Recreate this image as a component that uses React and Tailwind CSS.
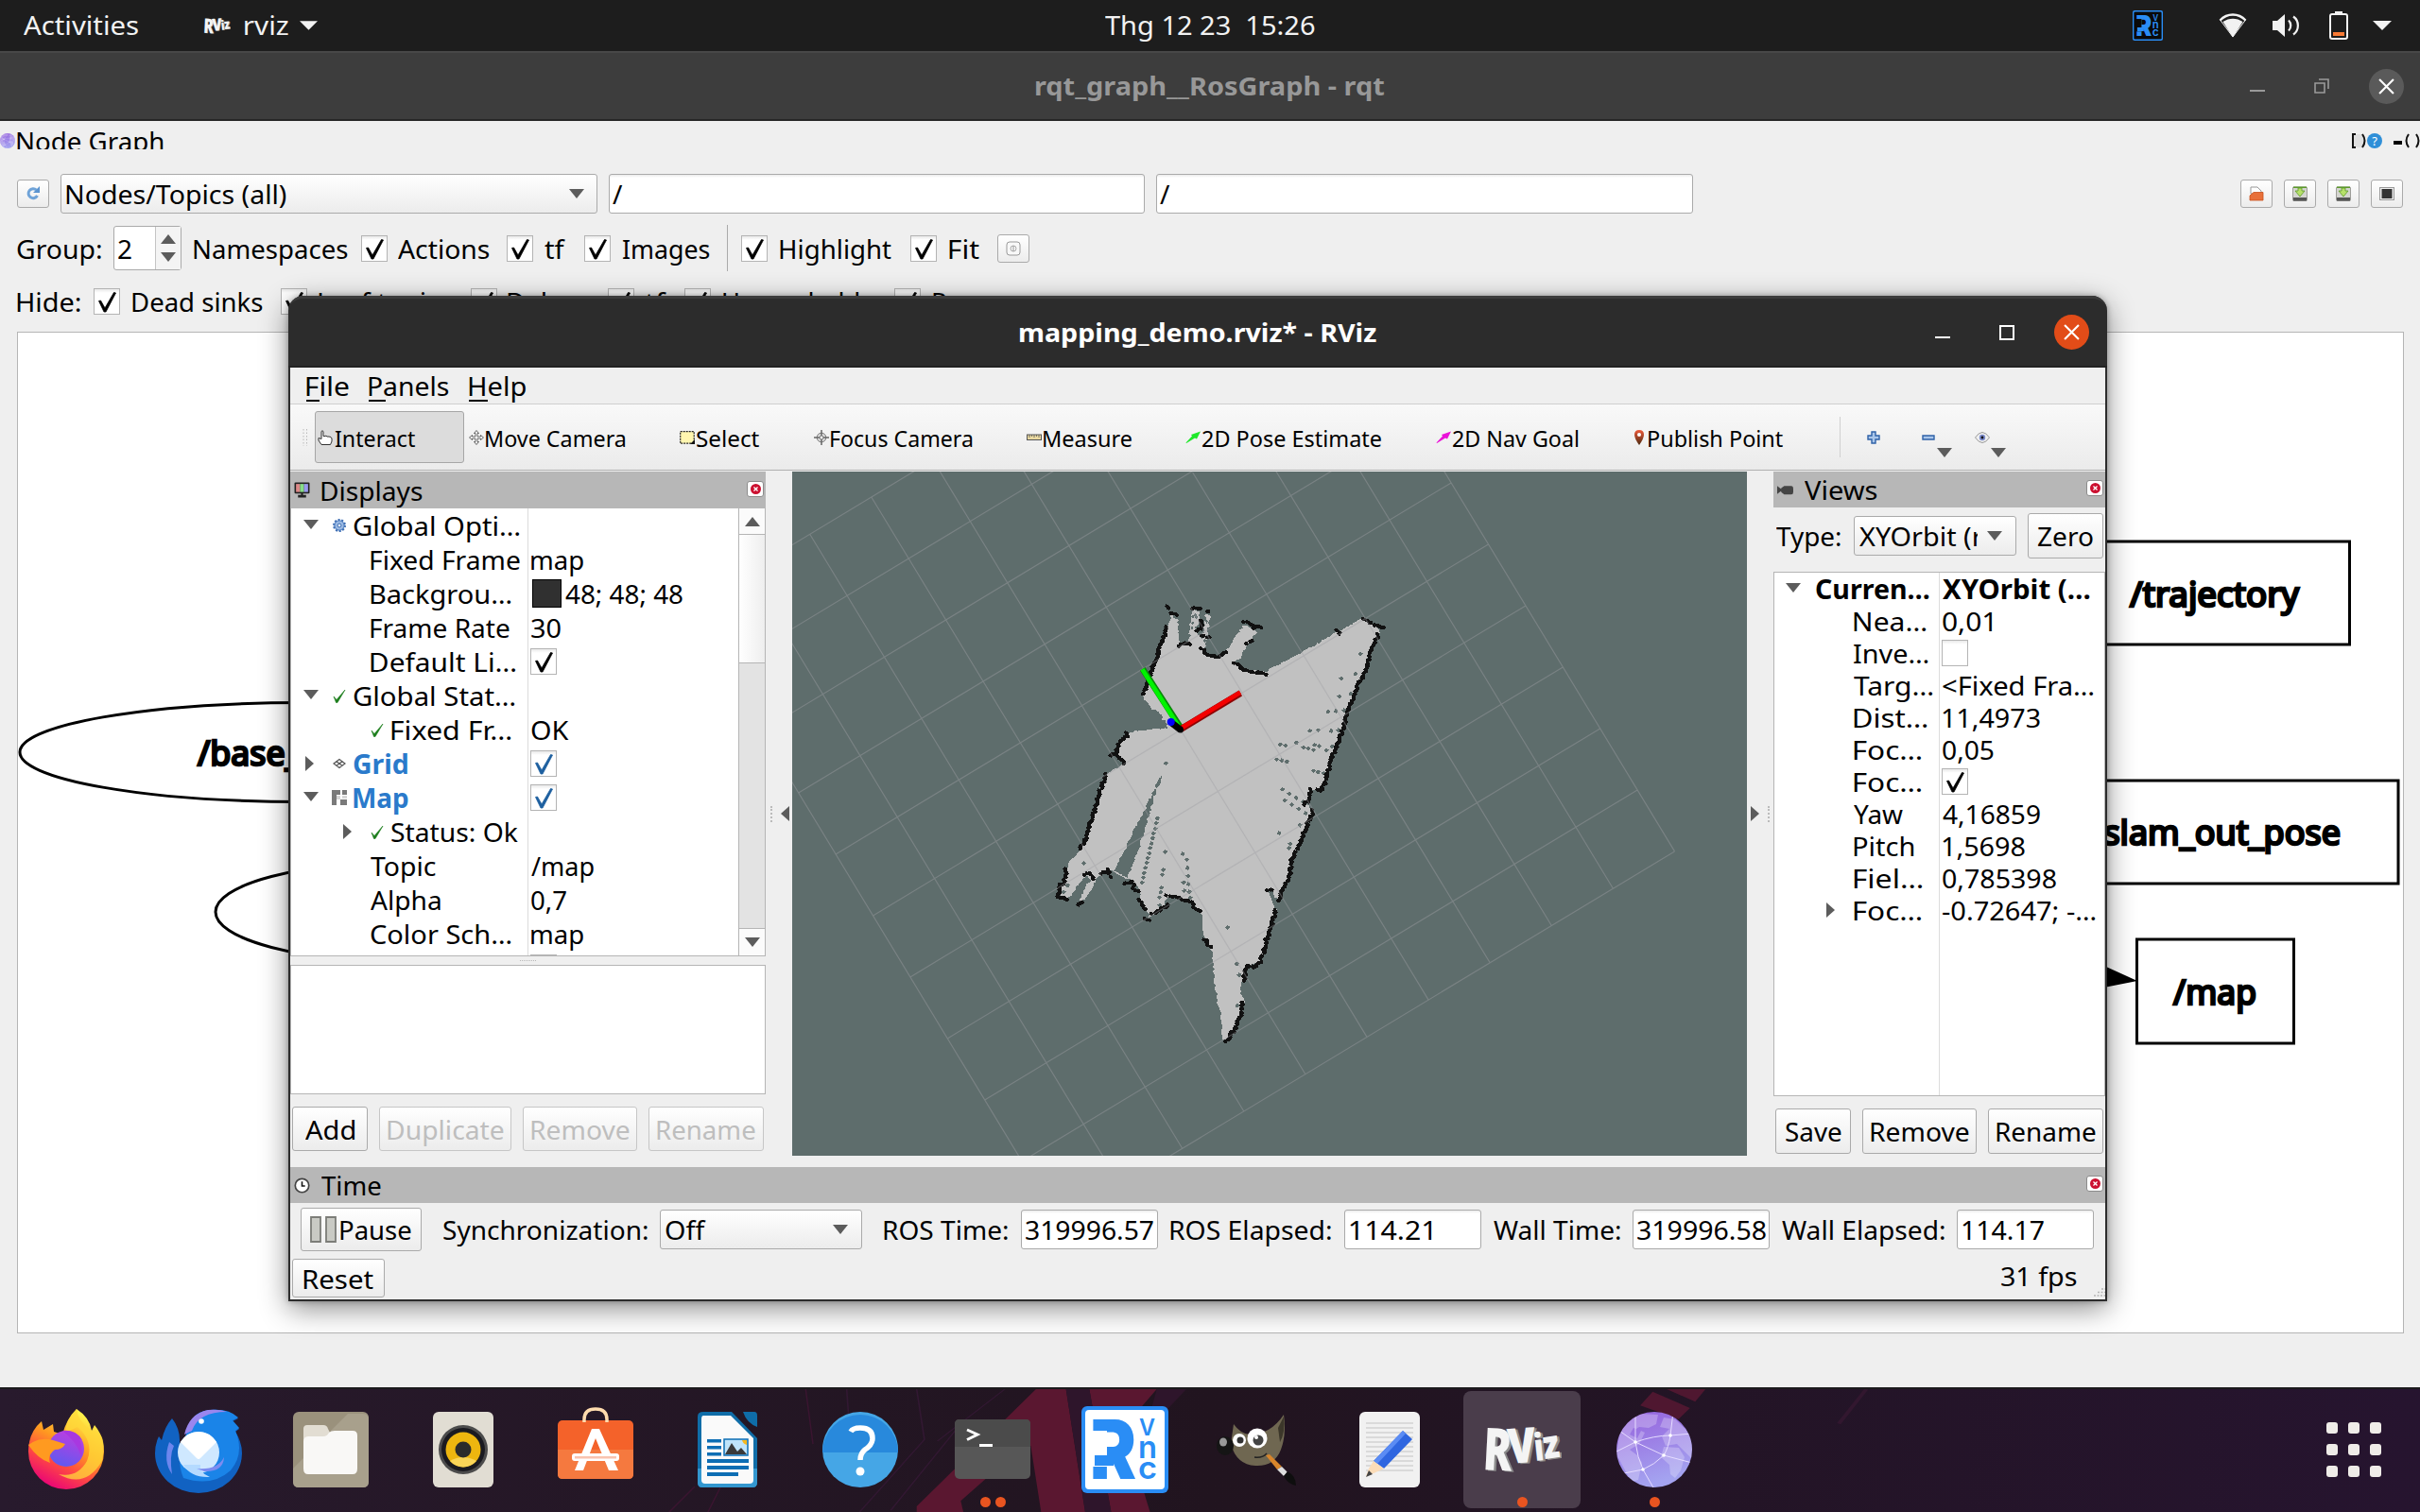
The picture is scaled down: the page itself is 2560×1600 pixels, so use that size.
import React, { useLayoutEffect, useRef } from "react";

function T({ w, className = "", children }) {
  const ref = useRef(null);
  useLayoutEffect(() => {
    const el = ref.current;
    const cs = getComputedStyle(el);
    const ctx = document.createElement("canvas").getContext("2d");
    ctx.font = `${cs.fontWeight} ${cs.fontSize} ${cs.fontFamily}`;
    const m = ctx.measureText(el.textContent);
    const left = m.actualBoundingBoxLeft;
    const k = w / (m.actualBoundingBoxRight + left);
    el.style.transform = `translate(${left * k}px, 0px) scaleX(${k})`;
  }, [w, children]);
  return (
    <span className={`block shrink-0 whitespace-pre ${className}`} style={{ width: w }}>
      <span ref={ref} className="inline-block origin-left">{children}</span>
    </span>
  );
}

function Check({ on = true, color = "#000", className = "" }) {
  return (
    <span className={`block size-[28px] shrink-0 border border-[#b4b4b4] bg-gradient-to-b from-[#e9e9e9] from-0% to-white to-15% ${className}`}>
      {on && (
        <svg viewBox="0 0 26 26" className="block size-full">
          <path d="M4.5 12.5 L6.5 12 L11 20 L20.500 3.500 L22.500 4 L12 24 L10 24 Z" fill={color} stroke={color} strokeWidth="0.8" />
        </svg>
      )}
    </span>
  );
}

const Down = ({ className = "" }) => (
  <svg viewBox="0 0 16 10" className={`block h-[10px] w-[16px] shrink-0 ${className}`}><path d="M0 0H16L8 10Z" fill="#5c5c5c" /></svg>
);
const Up = ({ className = "" }) => (
  <svg viewBox="0 0 16 10" className={`block h-[10px] w-[16px] shrink-0 ${className}`}><path d="M0 10H16L8 0Z" fill="#5c5c5c" /></svg>
);
const Right = ({ className = "" }) => (
  <svg viewBox="0 0 9 16" className={`block h-[16px] w-[9px] shrink-0 ${className}`}><path d="M0 0V16L9 8Z" fill="#5c5c5c" /></svg>
);

function Btn({ className = "", children }) {
  return (
    <div className={`flex shrink-0 items-center justify-center rounded-[3px] border border-[#aaa] bg-gradient-to-b from-white to-[#ececec] ${className}`}>{children}</div>
  );
}
function Field({ className = "", children }) {
  return (
    <div className={`flex shrink-0 items-center rounded-[3px] border border-[#aaa] bg-gradient-to-b from-[#ececec] from-0% to-white to-8% ${className}`}>{children}</div>
  );
}

/* ---------- top bar ---------- */

function RvizLetters() {
  return (
    <>
      <text transform="translate(0,63) rotate(3) scale(0.98,1.35)" fontSize="46">R</text>
      <text transform="translate(28,57) rotate(-4) scale(1,1.2)" fontSize="43">V</text>
      <text transform="translate(56,54) rotate(-6) scale(0.9,1.1)" fontSize="36">i</text>
      <text transform="translate(66,52) rotate(-8) scale(0.95,1.150)" fontSize="36">z</text>
    </>
  );
}

function RvizLogo({ className }) {
  return (
    <svg viewBox="0 0 84 84" className={className}>
      <g fontFamily="'Open Sans','Noto Sans',sans-serif" fontWeight="800">
        <g fill="#8a8a8a" transform="translate(2.500,1)"><RvizLetters /></g>
        <g fill="#f4f4f4"><RvizLetters /></g>
      </g>
    </svg>
  );
}

function VncLogo({ className, bg }) {
  return (
    <svg viewBox="0 0 92 92" className={className}>
      <rect width="92" height="92" rx="6" fill="#2a8df5" />
      <rect x="4" y="4" width="84" height="84" rx="4" fill={bg} />
      <g fill="#2a8df5" fontFamily="Inter,'Noto Sans',sans-serif">
        <text x="9" y="77" fontSize="86" fontWeight="900" textLength="49" lengthAdjust="spacingAndGlyphs">R</text>
        <path d="M8 26H27V64H8Z" fill={bg} />
        <path d="M14 14.500H34V26H14ZM14 52H34V63H14Z" />
        <text x="61" y="31" fontSize="24" fontWeight="600" textLength="17" lengthAdjust="spacingAndGlyphs">V</text>
        <text x="60" y="55" fontSize="33" fontWeight="600" textLength="20" lengthAdjust="spacingAndGlyphs">n</text>
        <text x="60" y="77" fontSize="33" fontWeight="600" textLength="20" lengthAdjust="spacingAndGlyphs">c</text>
      </g>
    </svg>
  );
}

function TopBar() {
  return (
    <div className="flex h-[54px] items-center bg-[#1d1d1d] text-[27px] leading-[54px] text-[#f2f2f2]">
      <T w={121} className="ml-[25px]">Activities</T>
      <RvizLogo className="ml-[69px] size-[29px]" />
      <T w={46} className="ml-[15px]">rviz</T>
      <svg viewBox="0 0 20 10" className="ml-[12px] h-[10px] w-[19px]"><path d="M0 0H20L10 10Z" fill="#f2f2f2" /></svg>
      <T w={222} className="ml-[833px]">Thg 12 23  15:26</T>
      <VncLogo bg="#0a0a0a" className="ml-[865px] size-[32px]" />
      <svg viewBox="0 0 30 26" className="ml-[59px] h-[26px] w-[30px]">
        <path d="M1.500 7.500 C9 -0.500 21 -0.500 28.500 7.500" fill="none" stroke="#f2f2f2" strokeWidth="2.400" />
        <path d="M4.500 9 C11 4.500 19 4.500 25.500 9 L15 25.500Z" fill="#f2f2f2" />
        <path d="M1.500 7 L15 25" stroke="#f2f2f2" strokeWidth="1" /><path d="M28.500 7 L15 25" stroke="#f2f2f2" strokeWidth="1" />
      </svg>
      <svg viewBox="0 0 30 26" className="ml-[26px] h-[26px] w-[30px]">
        <path d="M1 8 H6 L14 1 V25 L6 18 H1Z" fill="#f2f2f2" />
        <path d="M18 7.500 C21 10.500 21 15.500 18 18.500 M23 3.500 C29.500 8 29.500 18 23 22.500" fill="none" stroke="#f2f2f2" strokeWidth="2.200" />
      </svg>
      <svg viewBox="0 0 20 30" className="ml-[31px] h-[30px] w-[20px]">
        <rect x="6" y="0" width="8" height="3" fill="#f2f2f2" />
        <rect x="1" y="3" width="18" height="26" rx="2" fill="none" stroke="#f2f2f2" strokeWidth="2" />
        <rect x="4" y="22" width="12" height="4" fill="#f97a35" />
      </svg>
      <svg viewBox="0 0 20 10" className="ml-[26px] h-[10px] w-[20px]"><path d="M0 0H20L10 10Z" fill="#f2f2f2" /></svg>
    </div>
  );
}

/* ---------- node graph window ---------- */

function Globe({ className }) {
  return (
    <svg viewBox="0 0 80 80" className={className}>
      <defs>
        <linearGradient id="globe" x1="0" y1="0" x2="0.3" y2="1"><stop offset="0" stopColor="#9560dc" /><stop offset="1" stopColor="#a4a3f0" /></linearGradient>
        <clipPath id="globeClip"><circle cx="40" cy="40" r="40" /></clipPath>
      </defs>
      <circle cx="40" cy="40" r="40" fill="url(#globe)" />
      <g clipPath="url(#globeClip)">
        <path d="M5 10 L26 2 L44 3 L42 13 L34 17 L24 16 L21 18 L18 17 L14 24 L22 28 L26 20 L30 22 L24 34 L14 40 L22 46 L27 54 L23 72 L16 74 L8 60 L0 45Z" fill="#fff" opacity="0.250" />
        <path d="M46 16 L50 6 L62 8 L80 25 V50 L72 42 L64 34 L52 36 L48 26 L56 18Z M50 37 L66 38 L72 48 L68 62 L62 70 L57 66 L56 56 L47 48Z" fill="#fff" opacity="0.250" />
        <path d="M20 0 L20 32 Q22 48 28 61 L40 82 M0 42 L20 32 L3 20 M20 32 Q40 25 57 25 L80 23 M57 25 L60 0 M20 32 L50 46 L80 54 M57 25 Q55 38 50 46 Q40 56 28 61 L8 65" fill="none" stroke="#e6dcff" strokeWidth="1" />
        {[[20, 32], [57, 25], [50, 46], [28, 61]].map(([x, y]) => <circle key={x} cx={x} cy={y} r="1.800" fill="#fff" />)}
      </g>
    </svg>
  );
}

function ToolButton({ className = "", children }) {
  return (
    <Btn className={`h-[30px] w-[34px] ${className}`}>
      <svg viewBox="0 0 16 16" className="size-[16px]">{children}</svg>
    </Btn>
  );
}
const SaveGlyph = () => (
  <>
    <rect x="0.500" y="1" width="15" height="14.500" rx="1" fill="#d5d5d0" stroke="#8b8b88" strokeWidth="0.8" />
    <rect x="1" y="12" width="14" height="3.500" fill="#555" />
    <path d="M1 0.500H15V2H1Z" fill="#5c9a2a" />
    <path d="M6 2H10V5H13L8 11L3 5H6Z" fill="#b7e06a" stroke="#5c9a2a" strokeWidth="0.8" />
  </>
);

function RosGraph() {
  const label = { fontFamily: "'Noto Sans',sans-serif", fontSize: 36, stroke: "#000", strokeWidth: 2.6, lengthAdjust: "spacingAndGlyphs" };
  return (
    <div className="ml-[18px] h-[1060px] w-[2525px] border border-[#b5b5b5] bg-white">
      <svg viewBox="19 352 2523 1058" className="block size-full">
        <g fill="none" stroke="#000" strokeWidth="3">
          <ellipse cx="321" cy="796" rx="300" ry="52.500" />
          <ellipse cx="430" cy="965" rx="202" ry="53" />
          <rect x="2000" y="573" width="485.500" height="109" />
          <rect x="2100" y="826" width="437" height="109" />
          <rect x="2260.500" y="994" width="166" height="110" />
        </g>
        <path d="M2195 1008 L2261 1038 L2195 1051Z" />
        <text x="209" y="810" textLength="168" {...label}>/base_link</text>
        <text x="2253" y="642" textLength="179" {...label}>/trajectory</text>
        <text x="2212" y="894" textLength="264" {...label}>/slam_out_pose</text>
        <text x="2299" y="1063" textLength="88" {...label}>/map</text>
      </svg>
    </div>
  );
}

function RqtWindow() {
  return (
    <div className="h-[1414px] bg-[#efefef] text-[28px] leading-[36px] text-black">
      <div className="flex h-[74px] items-center border-t-2 border-b-2 border-t-[#484848] border-b-[#262626] bg-[#3d3d3d]">
        <T w={369} className="ml-[1095px] text-[27px] font-bold text-[#989898]">rqt_graph__RosGraph - rqt</T>
        <span className="mt-[10px] ml-[916px] h-[2px] w-[16px] bg-[#9a9a9a]" />
        <svg viewBox="0 0 16 16" className="ml-[52px] size-[16px]"><path d="M1 5H11V15H1Z M5 1H15V11" fill="none" stroke="#9a9a9a" strokeWidth="1.600" /></svg>
        <span className="ml-[42px] flex size-[37px] items-center justify-center rounded-full bg-[#5a5a5a]">
          <svg viewBox="0 0 16 16" className="size-[17px]"><path d="M1 1L15 15M15 1L1 15" stroke="#fff" strokeWidth="2" /></svg>
        </span>
      </div>
      <div className="mt-[4px] flex h-[26px] items-start overflow-hidden">
        <Globe className="mt-[9px] size-[16px]" />
        <T w={155} className="ml-[2px] leading-[34px]">Node Graph</T>
        <svg viewBox="0 0 72 16" className="mt-[9px] ml-[2315px] h-[16px] w-[72px]">
          <rect x="2" y="1" width="10" height="14" fill="#e0e0e0" />
          <path d="M4 1H1V15H4" fill="none" stroke="#111" strokeWidth="2" /><path d="M11 1Q16 8 11 15" fill="none" stroke="#111" strokeWidth="2" />
          <circle cx="24" cy="8" r="8" fill="#2f8fd8" /><text x="24" y="13" fontSize="13" fill="#fff" textAnchor="middle" fontFamily="Noto Sans, sans-serif">?</text>
          <path d="M44 8H53V12H44Z" /><path d="M60 1Q55 8 60 15M68 1Q73 8 68 15" fill="none" stroke="#111" strokeWidth="2" />
        </svg>
      </div>
      <div className="mt-[26px] flex h-[42px] items-center">
        <ToolButton className="ml-[18px]"><path d="M11.500 4 A5 5 0 1 0 12.500 10" fill="none" stroke="#6fa3d8" strokeWidth="3" /><path d="M8 7H15V0Z" fill="#5b94d0" /></ToolButton>
        <Btn className="ml-[12px] h-[42px] w-[568px] !justify-start">
          <T w={233} className="ml-[5px]">Nodes/Topics (all)</T><Down className="ml-[299px]" />
        </Btn>
        <Field className="ml-[12px] h-[42px] w-[567px]"><T w={11} className="ml-[3px]">/</T></Field>
        <Field className="ml-[12px] h-[42px] w-[568px]"><T w={11} className="ml-[3px]">/</T></Field>
        <ToolButton className="ml-[579px]"><path d="M2 1H9L13 5V8H2Z" fill="#fff" stroke="#999" /><path d="M1 15V10L5 6.500H15V15Z" fill="#e8703a" stroke="#c8501c" strokeWidth="0.8" /></ToolButton>
        <ToolButton className="ml-[12px]"><SaveGlyph /></ToolButton>
        <ToolButton className="ml-[12px]"><SaveGlyph /></ToolButton>
        <ToolButton className="ml-[12px]"><rect x="0.500" y="1.500" width="15" height="13" fill="#eee" stroke="#999" /><rect x="2.500" y="3" width="11" height="10" fill="#333" /></ToolButton>
      </div>
      <div className="mt-[13px] flex h-[47px] items-center">
        <T w={89} className="ml-[18px]">Group:</T>
        <div className="ml-[13px] flex h-[47px] w-[72px] items-center rounded-[3px] border border-[#aaa] bg-white">
          <T w={14} className="ml-[4px]">2</T>
          <div className="ml-auto flex h-full w-[27px] flex-col items-center justify-between border-l border-[#c4c4c4] bg-[#f4f4f4] py-[8px]"><Up /><Down /></div>
        </div>
        <T w={163} className="ml-[13px]">Namespaces</T>
        <Check className="ml-[14px]" /><T w={97} className="ml-[11px]">Actions</T>
        <Check className="ml-[18px]" /><T w={22} className="ml-[12px]">tf</T>
        <Check className="ml-[20px]" /><T w={92} className="ml-[13px]">Images</T>
        <span className="ml-[18px] h-[49px] w-px bg-[#aaa]" />
        <Check className="ml-[14px]" /><T w={118} className="ml-[13px]">Highlight</T>
        <Check className="ml-[20px]" /><T w={32} className="ml-[13px]">Fit</T>
        <ToolButton className="ml-[19px]"><rect x="1" y="1" width="14" height="14" rx="3" fill="#f8f8f8" stroke="#999" /><circle cx="8" cy="8" r="3" fill="none" stroke="#aaa" /><path d="M8 5V11" stroke="#999" /></ToolButton>
      </div>
      <div className="mt-[13px] flex h-[40px] items-center">
        <T w={67} className="ml-[18px]">Hide:</T>
        <Check className="ml-[14px]" /><T w={138} className="ml-[13px]">Dead sinks</T>
        <Check className="ml-[19px]" /><T w={141} className="ml-[12px]">Leaf topics</T>
        <Check className="ml-[20px]" /><T w={85} className="ml-[11px]">Debug</T>
        <Check className="ml-[21px]" /><T w={23} className="ml-[11px]">tf</T>
        <Check className="ml-[19px]" /><T w={160} className="ml-[13px]">Unreachable</T>
        <Check className="ml-[21px]" /><T w={94} className="ml-[13px]">Params</T>
      </div>
      <div className="h-[12px]" />
      <RosGraph />
    </div>
  );
}

/* ---------- map view ---------- */

function makeRandom(seed) {
  let s = seed;
  return () => {
    s = (s * 16807) % 2147483647;
    return s / 2147483647 - 0.5;
  };
}
function walk(points, step) {
  const out = [];
  for (let i = 0; i < points.length - 1; i++) {
    const [x0, y0] = points[i];
    const [x1, y1] = points[i + 1];
    const n = Math.max(1, Math.round(Math.hypot(x1 - x0, y1 - y0) / step));
    for (let k = 0; k < n; k++) out.push([x0 + ((x1 - x0) * k) / n, y0 + ((y1 - y0) * k) / n]);
  }
  out.push(points[points.length - 1]);
  return out;
}
function roughPolygon(points, seed) {
  const r = makeRandom(seed);
  return walk([...points, points[0]], 7).map(([x, y]) => `${(x + r() * 8).toFixed(1)},${(y + r() * 6).toFixed(1)}`).join(" ");
}
function cells(points, seed) {
  const r = makeRandom(seed);
  return walk(points, 6).map(([x, y]) => {
    const cx = x + r() * 8;
    const cy = y + r() * 5;
    return `M${(cx - 7).toFixed(1)} ${cy.toFixed(1)}l4 -6l7 1l4 5l-4 6l-7 -1z`;
  }).join("");
}

const rightEdge = [[1195, 205], [1182, 235], [1165, 270], [1158, 310], [1125, 370], [1110, 410], [1095, 445], [1085, 490], [1065, 540], [1045, 590], [1035, 630], [1015, 685]];
const midEdge = [[988, 748], [968, 790], [945, 850], [920, 900], [912, 950], [890, 990], [880, 1024]];
const mapArea = [
  [528, 125], [545, 150], [558, 160], [563, 200], [568, 238], [590, 232], [596, 215], [600, 140], [610, 130], [627, 135], [626, 155], [615, 190], [622, 205], [635, 215], [638, 250], [650, 268], [685, 272],
  [712, 260], [740, 212], [770, 175], [800, 190], [808, 200], [780, 240], [760, 275], [738, 290], [770, 312], [835, 322],
  [1147, 155], [1200, 188], ...rightEdge, [982, 684], [964, 725], ...midEdge, [850, 990], [873, 1048], [855, 1100], [830, 1185], [820, 1212],
  [775, 1224], [768, 1260], [758, 1295], [768, 1335], [748, 1400], [712, 1456], [700, 1450], [697, 1390], [685, 1330], [675, 1270],
  [668, 1180], [655, 1160], [640, 1130], [635, 1065], [610, 1040], [600, 1028], [560, 1015], [530, 1010], [505, 1055], [468, 1075],
  [440, 1015], [436, 985], [415, 962], [396, 955], [345, 930], [320, 940], [298, 960], [285, 990], [262, 1020], [245, 1022], [262, 1000],
  [270, 975], [285, 958], [265, 945], [240, 980], [218, 1012], [195, 1015], [178, 1003], [205, 930], [215, 905], [245, 872], [268, 830],
  [283, 780], [295, 745], [310, 690], [332, 634], [388, 602], [365, 570], [372, 540], [400, 512], [420, 502], [530, 495], [505, 455],
  [470, 425], [445, 395], [478, 310], [503, 245], [528, 185], [536, 150],
];
const gap = [[506, 635], [500, 665], [490, 690], [465, 765], [440, 850], [420, 900], [398, 955], [355, 932], [385, 880], [412, 825], [440, 770], [478, 695], [500, 650]];
const walls = [
  [[528, 120], [530, 126]], [[540, 142], [555, 145]], [[525, 185], [503, 245], [478, 310], [462, 355], [446, 390]], [[565, 240], [580, 232], [600, 237]],
  [[608, 125], [628, 128]], [[657, 135], [658, 136]], [[635, 163], [638, 178], [620, 197]], [[638, 210], [655, 215]],
  [[635, 250], [650, 270], [685, 275], [712, 260]], [[770, 170], [785, 170], [800, 185], [822, 183]], [[780, 232], [795, 225]],
  [[740, 292], [770, 315], [835, 328]], [[1150, 157], [1165, 167], [1190, 180], [1208, 187]], [[1066, 192], [1073, 204]], rightEdge, [[1015, 685], [998, 683]],
  [[982, 682], [972, 712], [962, 730]], midEdge, [[845, 990], [856, 988]], [[870, 1052], [855, 1100], [838, 1150], [830, 1185], [820, 1210], [805, 1228], [775, 1224], [768, 1270]],
  [[766, 1335], [760, 1365], [748, 1400], [735, 1425], [712, 1458]], [[398, 508], [397, 520], [372, 537], [362, 570], [345, 577]], [[365, 575], [388, 602]],
  [[332, 636], [310, 690], [295, 745], [283, 780], [268, 830], [248, 865]], [[205, 928], [197, 965], [182, 980], [178, 1010], [208, 1020]],
  [[265, 942], [278, 938], [290, 955]], [[246, 1035], [256, 1028]], [[318, 940], [338, 930], [343, 950]], [[393, 972], [413, 963], [420, 990], [432, 993]],
  [[438, 1020], [455, 1050]], [[457, 1080], [470, 1085]], [[478, 1065], [530, 1038]], [[525, 1010], [560, 1015], [603, 1030], [612, 1048], [630, 1055]], [[645, 1142], [660, 1165]],
];
const holes = [
  [1138, 266], [1122, 327], [1077, 341], [1107, 388], [1071, 396], [1035, 443], [1060, 441], [1086, 439], [978, 502], [1004, 500], [1045, 502], [1068, 500],
  [884, 544], [900, 547], [935, 539], [957, 553], [972, 556], [989, 561], [992, 545], [1007, 549], [1030, 562], [1048, 550], [872, 590], [889, 593], [905, 597],
  [989, 625], [1004, 629], [1022, 632], [891, 682], [912, 695], [934, 708], [956, 720], [898, 716], [920, 729], [942, 742], [964, 755], [880, 816], [946, 792],
  [915, 849], [911, 862], [521, 602], [494, 771], [490, 786], [487, 803], [481, 818], [479, 832], [475, 848], [471, 862], [468, 878], [463, 893], [460, 908],
  [456, 923], [452, 939], [449, 953], [445, 969], [518, 874], [513, 929], [509, 944], [507, 984], [504, 998], [500, 1014], [501, 1038], [574, 880], [587, 898],
  [589, 923], [591, 948], [577, 968], [592, 973], [579, 993], [595, 997], [598, 1015], [716, 1106], [746, 1218], [753, 1252], [747, 1346], [260, 909], [209, 977], [196, 998],
];

function MapView() {
  const O = [411, 273.4], u = [65.1, -39.3], v = [39.4, 65];
  const p = (a, b) => `${(O[0] + a * u[0] + b * v[0]).toFixed(1)} ${(O[1] + a * u[1] + b * v[1]).toFixed(1)}`;
  let grid = "";
  for (let i = -5; i <= 5; i++) grid += `M${p(i, -5)}L${p(i, 5)}M${p(-5, i)}L${p(5, i)}`;
  return (
    <svg viewBox="0 0 1010 724" className="block h-[724px] w-[1010px] shrink-0 bg-[#5e6d6c]">
      <g transform="translate(221.700,101.500) scale(0.33333,0.34439)" shapeRendering="crispEdges">
        <polygon points={roughPolygon(mapArea, 77)} fill="#c1c1c1" />
        <path d={cells([[655, 148], [648, 185], [640, 245]], 5)} fill="#c1c1c1" />
        <polygon points={roughPolygon(gap, 41)} fill="#5e6d6c" />
        <path d="M846 995L858 990L878 1046L868 1050Z" fill="#5e6d6c" />
        {holes.map(([x, y], i) => <path key={i} d={`M${x - 8} ${y - 1}l5 -2l1 -4l5 2l5 3l-2 4l-5 5l-5 -3z`} fill="#5e6d6c" />)}
        {[[607, 150], [614, 146], [604, 185], [618, 152], [645, 225], [640, 190], [650, 165], [606, 170]].map(([x, y], i) => <path key={i} d={`M${x - 5} ${y}l5 -5l5 5l-5 7z`} fill="#5e6d6c" />)}
        {walls.map((w, i) => <path key={i} d={cells(w, 101 + i * 37)} fill="#111" />)}
      </g>
      <path d={grid} stroke="#a0a0a4" strokeOpacity="0.420" strokeWidth="1.200" fill="none" />
      <g transform="translate(221.700,101.500) scale(0.33333,0.34439)">
        <path d="M447 312L566 490" stroke="#078a07" strokeWidth="20" /><path d="M446 313L563 490" stroke="#00f400" strokeWidth="14" />
        <path d="M570 496L758 386" stroke="#8d0000" strokeWidth="20" /><path d="M569 494L757 384" stroke="#f40000" strokeWidth="14" />
        <path d="M540 478L569 500" stroke="#000" strokeWidth="21" /><circle cx="568" cy="499" r="9" />
        <circle cx="537" cy="475" r="12" fill="#0000f8" />
      </g>
    </svg>
  );
}

/* ---------- RViz window ---------- */

function DockTitle({ w, title, icon, className = "" }) {
  return (
    <div className={`flex shrink-0 items-center bg-[#b7b7b7] pl-[4px] ${className}`}>
      <svg viewBox="0 0 16 16" className="size-[17px]">{icon}</svg>
      <T w={w} className="ml-[12px]">{title}</T>
      <span className="mr-[2px] mb-[3px] ml-auto flex h-[17px] w-[18px] items-center justify-center rounded-[3px] border border-[#8c8c8c] bg-white">
        <svg viewBox="0 0 12 12" className="size-[11px]"><circle cx="6" cy="6" r="6" fill="#cc1030" /><path d="M3.800 3.800L8.200 8.200M8.200 3.800L3.800 8.200" stroke="#fff" strokeWidth="1.400" /></svg>
      </span>
    </div>
  );
}

const Ok = () => <path d="M2 9L5 12.500L14 2L6 15.500H4.500Z" fill="#1b7d1b" stroke="#1b7d1b" strokeWidth="0.6" />;
const Gear = () => (
  <g><circle cx="8" cy="8" r="5.800" fill="#8db0de" stroke="#3f6fb4" strokeWidth="2.400" strokeDasharray="2 1.600" /><circle cx="8" cy="8" r="5" fill="#9dbbe4" stroke="#4a79bb" strokeWidth="0.8" /><circle cx="8" cy="8" r="2" fill="#dfe9f6" stroke="#3f6fb4" /></g>
);
const GridIcon = () => <path d="M2 8L8 3.500L14 8L8 12.500ZM5 5.700L11 10.300M11 5.700L5 10.300" fill="none" stroke="#555" strokeWidth="1.200" />;
const MapIcon = () => (
  <g fill="#7a7a7a"><path d="M0 0H9V5H5V16H0ZM11 0H16V5H11ZM9 10H16V16H9V13Z" /><path d="M5 6H9V10H5ZM11 6H16V9H11Z" fill="#d6d6d6" /></g>
);

function DisplayRow({ lv = "a", exp, icon, name, w, blue, children }) {
  return (
    <div className="flex h-[36px] shrink-0 items-center">
      <div className="flex h-full w-[251px] shrink-0 items-center border-r border-[#dcdcdc]">
        {lv === "a" ? (
          <>
            <span className="ml-[12px] flex w-[17px] justify-center">{exp === "down" ? <Down className="mb-[2px]" /> : <Right className="mr-[2px]" />}</span>
            <svg viewBox="0 0 16 16" className="ml-[14px] size-[16px]">{icon}</svg>
            <T w={w} className={blue ? "ml-[7px] font-bold text-[#2a7acb]" : "ml-[7px]"}>{name}</T>
          </>
        ) : lv === "b" ? (
          <>
            <span className="ml-[55px] w-[9px]">{exp && <Right />}</span>
            <svg viewBox="0 0 16 16" className="ml-[19px] size-[16px]">{icon}</svg>
            <T w={w} className="ml-[7px]">{name}</T>
          </>
        ) : <T w={w} className="ml-[84px]">{name}</T>}
      </div>
      <div className="flex items-center pl-[3px]">{children}</div>
    </div>
  );
}

function Displays() {
  return (
    <div className="flex w-[503px] shrink-0 flex-col">
      <DockTitle w={107} title="Displays" className="h-[39px]" icon={<><rect x="0.500" y="0.500" width="15" height="11" rx="1" fill="#222" /><rect x="2" y="2" width="4" height="8" fill="#d88" /><rect x="6" y="2" width="4" height="8" fill="#8d8" /><rect x="10" y="2" width="4" height="8" fill="#99e" /><path d="M7 11H9V13H12V15.500H4V13H7Z" fill="#222" /></>} />
      <div className="flex h-[474px] border-b border-l border-[#b5b5b5] bg-white">
        <div className="flex flex-1 flex-col overflow-hidden">
          <DisplayRow exp="down" icon={<Gear />} name="Global Opti…" w={176} />
          <DisplayRow lv="c" name="Fixed Frame" w={158}><T w={55}>map</T></DisplayRow>
          <DisplayRow lv="c" name="Backgrou…" w={149}><span className="ml-[1px] h-[30px] w-[31px] border border-black bg-[#303030]" /><T w={124} className="ml-[4px]">48; 48; 48</T></DisplayRow>
          <DisplayRow lv="c" name="Frame Rate" w={147}><T w={31}>30</T></DisplayRow>
          <DisplayRow lv="c" name="Default Li…" w={154}><Check className="-ml-px" /></DisplayRow>
          <DisplayRow exp="down" icon={<Ok />} name="Global Stat…" w={171} />
          <DisplayRow lv="b" icon={<Ok />} name="Fixed Fr…" w={127}><T w={40}>OK</T></DisplayRow>
          <DisplayRow exp="right" icon={<GridIcon />} name="Grid" w={57} blue><Check color="#1d5f9f" className="-ml-px" /></DisplayRow>
          <DisplayRow exp="down" icon={<MapIcon />} name="Map" w={58} blue><Check color="#1d5f9f" className="-ml-px" /></DisplayRow>
          <DisplayRow lv="b" exp icon={<Ok />} name="Status: Ok" w={134} />
          <DisplayRow lv="c" name="Topic" w={69}><T w={66}>/map</T></DisplayRow>
          <DisplayRow lv="c" name="Alpha" w={74}><T w={37}>0,7</T></DisplayRow>
          <DisplayRow lv="c" name="Color Sch…" w={149}><T w={55}>map</T></DisplayRow>
          <DisplayRow lv="c" name="" w={1}><Check on={false} className="-ml-px" /></DisplayRow>
        </div>
        <div className="flex w-[29px] flex-col border-x border-[#b5b5b5] bg-[#e3e3e3]">
          <div className="flex h-[27px] items-center justify-center bg-[#fbfbfb]"><Up /></div>
          <div className="h-[137px] border-y border-[#b5b5b5] bg-gradient-to-r from-white to-[#eee]" />
          <div className="mt-auto flex h-[29px] items-center justify-center border-t border-[#b5b5b5] bg-[#fbfbfb]"><Down /></div>
        </div>
      </div>
      <div className="flex h-[9px] items-center justify-center"><span className="h-[1px] w-[17px] border-t border-dotted border-[#b8b8b8]" /></div>
      <div className="h-[137px] border border-[#b5b5b5] bg-white" />
      <div className="mt-[13px] flex h-[47px] pl-[2px]">
        <Btn className="w-[80px]"><T w={52}>Add</T></Btn>
        <Btn className="ml-[12px] w-[140px] !border-[#c6c6c6] text-[#bebebe]"><T w={123}>Duplicate</T></Btn>
        <Btn className="ml-[12px] w-[121px] !border-[#c6c6c6] text-[#bebebe]"><T w={104}>Remove</T></Btn>
        <Btn className="ml-[12px] w-[122px] !border-[#c6c6c6] text-[#bebebe]"><T w={104}>Rename</T></Btn>
      </div>
    </div>
  );
}

function ViewRow({ exp, name, w, bold, children }) {
  return (
    <div className={`flex h-[34px] shrink-0 items-center ${bold ? "font-bold" : ""}`}>
      <div className="flex h-full w-[175px] shrink-0 items-center">
        {bold ? (
          <><Down className="mb-[2px] ml-[12px]" /><T w={w} className="ml-[16px]">{name}</T></>
        ) : (
          <><span className="ml-[55px] w-[9px]">{exp && <Right />}</span><T w={w} className="ml-[20px]">{name}</T></>
        )}
      </div>
      <div className="flex items-center pl-[3px]">{children}</div>
    </div>
  );
}

function Views() {
  return (
    <div className="flex w-[351px] shrink-0 flex-col">
      <DockTitle w={77} title="Views" className="h-[38px]" icon={<path d="M0 4L4 7V9L0 12ZM4 6L7 4H14Q16 4 16 7V10Q16 12.500 14 12.500H7L4 10Z" fill="#444" />} />
      <div className="mt-[6px] flex h-[48px] items-center pl-[3px]">
        <T w={68}>Type:</T>
        <Btn className="ml-[14px] h-[42px] w-[172px] !justify-start">
          <div className="ml-[5px] w-[125px] overflow-hidden"><T w={131}>XYOrbit (r</T></div><Down className="ml-[10px]" />
        </Btn>
        <Btn className="ml-[12px] h-[48px] w-[80px]"><T w={58}>Zero</T></Btn>
      </div>
      <div className="relative mt-[14px] h-[555px] border border-[#b5b5b5] bg-white">
        <span className="absolute top-0 left-[174px] h-full w-px bg-[#dcdcdc]" />
        <ViewRow bold name="Curren…" w={120}><T w={156}>XYOrbit (…</T></ViewRow>
        <ViewRow name="Nea…" w={77}><T w={52}>0,01</T></ViewRow>
        <ViewRow name="Inve…" w={79}><Check on={false} className="-ml-px" /></ViewRow>
        <ViewRow name="Targ…" w={84}><T w={160}>{"<Fixed Fra…"}</T></ViewRow>
        <ViewRow name="Dist…" w={78}><T w={103}>11,4973</T></ViewRow>
        <ViewRow name="Foc…" w={72}><T w={54}>0,05</T></ViewRow>
        <ViewRow name="Foc…" w={72}><Check className="-ml-px" /></ViewRow>
        <ViewRow name="Yaw" w={52}><T w={103}>4,16859</T></ViewRow>
        <ViewRow name="Pitch" w={64}><T w={87}>1,5698</T></ViewRow>
        <ViewRow name="Fiel…" w={73}><T w={120}>0,785398</T></ViewRow>
        <ViewRow exp name="Foc…" w={72}><T w={162}>-0.72647; -…</T></ViewRow>
      </div>
      <div className="mt-[13px] flex h-[48px] pl-[2px]">
        <Btn className="w-[80px]"><T w={59}>Save</T></Btn>
        <Btn className="ml-[12px] w-[121px]"><T w={104}>Remove</T></Btn>
        <Btn className="ml-[12px] w-[122px]"><T w={105}>Rename</T></Btn>
      </div>
    </div>
  );
}

function Tool({ w, gap, icon, children }) {
  return (
    <div className={`flex items-center ${gap}`}>
      <svg viewBox="0 0 16 16" className="size-[16px] shrink-0">{icon}</svg>
      <T w={w} className="mt-[2px] ml-[2px]">{children}</T>
    </div>
  );
}

function Toolbar() {
  return (
    <div className="flex h-[71px] items-center border-y border-t-[#cfcfcf] border-b-[#b0b0b0] bg-gradient-to-b from-[#f9f9f9] to-[#ebebeb] text-[23px]">
      <svg viewBox="0 0 6 18" className="ml-[13px] h-[18px] w-[6px]"><path d="M1 0V18M4.500 0V18" stroke="#b8b8b8" strokeDasharray="1.500 2" /></svg>
      <div className="ml-[7px] flex h-[55px] w-[158px] items-center rounded-[3px] border border-[#a6a6a6] bg-[#dcdcdc] pl-[2px]">
        <Tool w={85} gap="" icon={<path d="M4 15.500L1 11L1 8.500L4 9.500V1.500Q5 0 6 1.500V6.500H8L9 6L10 7H12L14 7.500L15 9V12L13.500 15.500Z" fill="#fff" stroke="#333" strokeWidth="1" />}>Interact</Tool>
      </div>
      <Tool w={148} gap="ml-[5px]" icon={<path d="M8 0.500L10.500 3.500H9V7H12.500V5.500L15.500 8L12.500 10.500V9H9V12.500H10.500L8 15.500L5.500 12.500H7V9H3.500V10.500L0.500 8L3.500 5.500V7H7V3.500H5.500Z" fill="#fff" stroke="#555" strokeWidth="0.9" />}>Move Camera</Tool>
      <Tool w={66} gap="ml-[57px]" icon={<><rect x="0.700" y="1.700" width="14.500" height="12.500" fill="#fff6b0" stroke="#222" strokeWidth="1.200" strokeDasharray="2 1" /><path d="M16 10V15H11Z" fill="#111" /></>}>Select</Tool>
      <Tool w={150} gap="ml-[58px]" icon={<><circle cx="8" cy="8" r="4.800" fill="#ddd" stroke="#777" /><path d="M8 0V16M0 8H16" stroke="#666" strokeWidth="1.500" /><circle cx="8" cy="8" r="2" fill="#fff" stroke="#777" /></>}>Focus Camera</Tool>
      <Tool w={93} gap="ml-[57px]" icon={<><rect x="0.500" y="5" width="15" height="5.500" fill="#ead9a0" stroke="#555" /><path d="M3 5V8M5.500 5V7M8 5V8M10.500 5V7M13 5V8" stroke="#555" strokeWidth="0.8" /></>}>Measure</Tool>
      <Tool w={189} gap="ml-[57px]" icon={<path d="M0.500 13.500L7 6.500L6 5L16 1.500L12 9.500L10 8.500L1 14Z" fill="#1fe82a" />}>2D Pose Estimate</Tool>
      <Tool w={132} gap="ml-[58px]" icon={<path d="M0.500 13.500L7 6.500L6 5L16 1.500L12 9.500L10 8.500L1 14Z" fill="#ea12d8" />}>2D Nav Goal</Tool>
      <Tool w={142} gap="ml-[57px]" icon={<><defs><linearGradient id="pin" x1="0" y1="0" x2="0" y2="1"><stop offset="0" stopColor="#ee5a3a" /><stop offset="1" stopColor="#4a2a10" /></linearGradient></defs><path d="M8 16Q3 9 3 5Q3 0 8 0Q13 0 13 5Q13 9 8 16Z" fill="url(#pin)" /><circle cx="8" cy="5" r="2" fill="#fff" /></>}>Publish Point</Tool>
      <span className="ml-[60px] h-[43px] w-px bg-[#d0d0d0]" />
      <svg viewBox="0 0 14 14" className="ml-[28px] size-[14px]"><path d="M5 1H9V5H13V9H9V13H5V9H1V5H5Z" fill="#a9c6ea" stroke="#2f62a8" strokeWidth="1.400" /></svg>
      <svg viewBox="0 0 14 14" className="ml-[44px] size-[14px]"><path d="M1 5H13V9H1Z" fill="#a9c6ea" stroke="#2f62a8" strokeWidth="1.400" /></svg>
      <Down className="mt-[33px] ml-[2px]" />
      <svg viewBox="0 0 16 12" className="ml-[24px] h-[12px] w-[16px]"><path d="M0.500 6Q8 -5 15.500 6Q8 17 0.500 6Z" fill="#f0f0f0" stroke="#999" /><circle cx="8" cy="6" r="3.200" fill="#7c8ccc" /><circle cx="8" cy="6" r="1.400" fill="#111" /></svg>
      <Down className="mt-[33px] ml-px" />
    </div>
  );
}

function TimePanel() {
  return (
    <>
      <DockTitle w={63} title="Time" className="mt-[12px] h-[38px]" icon={<><circle cx="8" cy="8" r="6.800" fill="#fff" stroke="#444" strokeWidth="1.600" /><path d="M8 4V8.500H11" fill="none" stroke="#111" strokeWidth="1.500" /></>} />
      <div className="mt-[5px] flex h-[46px] items-center">
        <Btn className="ml-[11px] h-[46px] w-[128px] !justify-start">
          <svg viewBox="0 0 28 28" className="ml-[9px] size-[28px]"><path d="M1 1H11V27H1ZM17 1H27V27H17Z" fill="#c9cac4" stroke="#7c7d78" strokeWidth="1.800" /></svg>
          <T w={75} className="ml-[4px]">Pause</T>
        </Btn>
        <T w={216} className="ml-[23px]">Synchronization:</T>
        <Btn className="ml-[13px] h-[42px] w-[214px] !justify-start"><T w={43} className="ml-[5px]">Off</T><Down className="ml-[134px]" /></Btn>
        <T w={131} className="ml-[23px]">ROS Time:</T>
        <Field className="ml-[14px] h-[42px] w-[145px]"><T w={135} className="ml-[4px]">319996.57</T></Field>
        <T w={170} className="ml-[13px]">ROS Elapsed:</T>
        <Field className="ml-[14px] h-[42px] w-[145px]"><T w={86} className="ml-[5px]">114.21</T></Field>
        <T w={134} className="ml-[13px]">Wall Time:</T>
        <Field className="ml-[13px] h-[42px] w-[145px]"><T w={136} className="ml-[4px]">319996.58</T></Field>
        <T w={172} className="ml-[13px]">Wall Elapsed:</T>
        <Field className="ml-[13px] h-[42px] w-[145px]"><T w={86} className="ml-[5px]">114.17</T></Field>
      </div>
      <div className="mt-[8px] flex h-[41px] items-center">
        <Btn className="ml-[2px] h-[41px] w-[98px]"><T w={74}>Reset</T></Btn>
        <T w={80} className="mb-[6px] ml-auto">31 fps</T>
        <svg viewBox="0 0 12 12" className="mt-[26px] ml-[18px] size-[12px]"><path d="M0 11H12M4 7.500H12M8 4H12" stroke="#b5b5b5" strokeDasharray="2 1.500" strokeWidth="1.500" /></svg>
      </div>
    </>
  );
}

function RvizWindow() {
  return (
    <div className="absolute top-[313px] left-[305px] flex h-[1064px] w-[1924px] flex-col overflow-visible rounded-t-[16px] bg-[#2c2c2c] px-[2px] pb-[2px] text-[28px] leading-[36px] text-black shadow-[0_8px_30px_rgba(0,0,0,0.45),0_0_6px_rgba(0,0,0,0.3)]">
      <div className="-mx-[2px] flex h-[76px] shrink-0 items-center rounded-t-[16px] border-t-[3px] border-b-2 border-t-[#3b3b3b] border-b-[#222]">
        <T w={378} className="ml-[773px] text-[27px] font-bold text-white">mapping_demo.rviz* - RViz</T>
        <span className="mt-[11px] ml-[591px] h-[2px] w-[16px] bg-white" />
        <span className="ml-[52px] size-[16px] border-2 border-white" />
        <span className="ml-[42px] flex size-[37px] items-center justify-center rounded-full bg-[#e24c18]">
          <svg viewBox="0 0 16 16" className="size-[17px]"><path d="M1 1L15 15M15 1L1 15" stroke="#fff" strokeWidth="2" /></svg>
        </span>
      </div>
      <div className="flex flex-1 flex-col bg-[#efefef]">
        <div className="flex h-[38px] items-center">
          {[["File", 45, "ml-[17px]", "w-[14px]"], ["Panels", 85, "ml-[21px]", "w-[18px]"], ["Help", 60, "ml-[21px]", "w-[20px]"]].map(([t, w, m, uw]) => (
            <div key={t} className={`flex h-[36px] flex-col ${m}`}>
              <T w={w} className="h-[33px]">{t}</T><span className={`h-[2px] shrink-0 bg-black ${uw}`} />
            </div>
          ))}
        </div>
        <Toolbar />
        <div className="mt-px flex h-[724px]">
          <Displays />
          <div className="flex w-[28px] items-center justify-end gap-[9px] pr-[3px]">
            <span className="h-[17px] border-l-2 border-dotted border-[#bbb]" />
            <Right className="rotate-180" />
          </div>
          <MapView />
          <div className="flex w-[28px] items-center gap-[9px] pl-[4px]">
            <Right /><span className="h-[17px] border-l-2 border-dotted border-[#bbb]" />
          </div>
          <Views />
        </div>
        <TimePanel />
      </div>
    </div>
  );
}

/* ---------- dock ---------- */

const icons = {
  firefox: (
    <>
      <defs>
        <linearGradient id="ff" x1="0.8" y1="0" x2="0.3" y2="1"><stop offset="0.1" stopColor="#fff04a" /><stop offset="0.45" stopColor="#ff9a20" /><stop offset="0.7" stopColor="#ff4a42" /><stop offset="1" stopColor="#e8007a" /></linearGradient>
        <linearGradient id="ffb" x1="0.7" y1="0" x2="0.3" y2="1"><stop offset="0" stopColor="#c13ce0" /><stop offset="1" stopColor="#5d5af0" /></linearGradient>
      </defs>
      <path d="M61 7 Q75 16 77 30 L80 24 Q90 36 90 52 A40 40 0 0 1 10 52 Q10 32 24 20 L26 29 L36 23 L37 31 L46 34 Q50 18 61 7Z" fill="url(#ff)" />
      <path d="M62 26 Q80 42 72 62 Q62 80 42 76 Q70 92 88 62 Q94 30 77 30 Q62 20 61 7 Q48 20 50 32Z" fill="#ffd83a" opacity="0.750" />
      <circle cx="50" cy="49" r="19" fill="url(#ffb)" />
      <path d="M10 45 Q22 36 36 40 L49 44 Q46 50 38 50 Q30 56 33 64 Q20 60 10 45Z" fill="#ff9a20" />
      <path d="M46 30 Q60 28 67 40 L64 39 Q68 48 66 58 Q62 42 46 30Z" fill="#a838e0" />
    </>
  ),
  thunderbird: (
    <>
      <path d="M22 17 Q31 28 30 44 L38 38 Q38 14 62 8 Q80 6 92 17 L86 20 L93 28 L89 31 Q96 42 96 54 A46 42 0 0 1 4 54 Q4 44 8 36 L11 40 Q14 26 22 17Z" fill="#1162c2" />
      <path d="M40 24 Q46 9 62 8 Q82 6 92 16 L86 19 L93 27 L89 30 Q99 54 84 72 Q64 90 34 80 Q26 60 34 42Z" fill="#1a84e8" />
      <path d="M35 34 Q40 12 60 8 Q72 7 80 10 Q50 10 43 30Z" fill="#9a86ee" />
      <circle cx="50" cy="53" r="22" fill="#cfe8ff" /><path d="M31 42 Q38 31 50 31 Q62 31 69 42 L52 59 Q50 61 48 59Z" fill="#fff" />
      <path d="M34 66 Q42 80 62 79 Q50 74 52 66Z" fill="#b4daff" /><path d="M48 70 Q70 72 77 58 Q76 74 56 73Z" fill="#7e8cf0" />
      <circle cx="53" cy="20" r="2.800" fill="#fff" />
      <path d="M19 42 Q12 62 22 76 Q19 56 24 46Z" fill="#6d86ee" />
    </>
  ),
  files: (
    <>
      <rect x="10" y="10" width="80" height="80" rx="6" fill="#9a917c" /><path d="M68 12H84Q90 12 90 18V84Q90 90 84 90H16Q10 90 10 84V70Z" fill="#a8a08c" />
      <path d="M21 36V28Q21 24 25 24H42Q46 24 47 28L49 32H72V44H21Z" fill="#e2ddd2" />
      <path d="M21 42Q21 36 26 36H42Q46 36 48 32Q50 30 54 30H73Q78 30 78 35V70Q78 76 73 76H26Q21 76 21 70Z" fill="#f9f8f6" />
    </>
  ),
  music: (
    <>
      <rect x="18" y="10" width="64" height="80" rx="6" fill="#e1ddd3" /><circle cx="50" cy="50" r="26" fill="#4c4c4c" /><circle cx="50" cy="50" r="23" fill="#1a1a20" />
      <circle cx="50" cy="50" r="18.500" fill="#edb60f" /><path d="M36 62A18.500 18.500 0 0 0 64 62Q50 54 36 62Z" fill="#f9d558" /><circle cx="50" cy="50" r="8.500" fill="#2b2b2b" />
    </>
  ),
  store: (
    <>
      <rect x="10" y="19" width="80" height="62" rx="5" fill="#f4622a" /><path d="M10 50H90V76Q90 81 85 81H15Q10 81 10 76Z" fill="#f5793f" />
      <path d="M38 21V18Q38 7 50 7Q62 7 62 18V21" fill="none" stroke="#ffdcae" strokeWidth="3.500" />
      <path d="M46 28H54L74 72H64L50 38L37 72H28Z" fill="#fff" /><rect x="25" y="54" width="50" height="8" rx="3" fill="#fff" /><rect x="28" y="57" width="44" height="2.500" fill="#f9c4b0" />
    </>
  ),
  writer: (
    <>
      <path d="M24 10H54L81 38V85Q81 90 76 90H23Q18 90 18 85V15Q18 10 24 10Z" fill="#0f6da8" /><path d="M18 70H81V85Q81 90 76 90H23Q18 90 18 85Z" fill="#3397cf" />
      <path d="M24 14H53L77 38V82Q77 86 73 86H26Q22 86 22 82V18Q22 14 24 14Z" fill="#fafafa" /><path d="M66 10H78Q81 10 81 14V26Q70 22 66 10Z" fill="#0f6da8" />
      <path d="M28 39H43V42.500H28ZM28 46H43V49.500H28ZM28 53H43V56.500H28ZM28 60H72V64H28ZM28 67H72V71H28ZM28 74H61V78H28Z" fill="#0d6eb4" />
      <rect x="46" y="39" width="25" height="17" fill="#bfe4fa" stroke="#0d6eb4" strokeWidth="1.500" /><path d="M47 55L54 43L60 52L64 48L70 55Z" fill="#3a3a3a" /><path d="M65 40H70V45Q66 44 65 40Z" fill="#f8b81a" />
    </>
  ),
  help: (
    <>
      <circle cx="50" cy="50" r="40" fill="#45a6e6" /><path d="M10 53A40 40 0 1 1 90 53Z" fill="#2889dc" />
      <path d="M40 31Q42 27 50 27Q63 27 63 38Q63 45 55 50Q50 54 50 61" fill="none" stroke="#fff" strokeWidth="5.500" /><circle cx="50" cy="73" r="4.500" fill="#fff" />
    </>
  ),
  terminal: (
    <>
      <rect x="10" y="18" width="80" height="63" rx="5" fill="#575757" /><path d="M10 47V23Q10 18 15 18H85Q90 18 90 23V47Z" fill="#4b4b4b" />
      <path d="M23 29L34 34L23 39.500" fill="none" stroke="#fff" strokeWidth="3" /><path d="M36 45.500H50" stroke="#fff" strokeWidth="3" />
    </>
  ),
  gimp: (
    <>
      <path d="M25 23Q32 33 42 34Q64 34 78 13Q81 34 75 50Q68 68 48 67Q28 66 22 44Z" fill="#6f6751" /><path d="M72 27L78 15Q80 32 74 42Z" fill="#3c372a" />
      <ellipse cx="16" cy="46" rx="9" ry="10" fill="#151515" /><ellipse cx="14" cy="42" rx="4" ry="4.500" fill="#999" />
      <circle cx="31" cy="40" r="7" fill="#fff" /><circle cx="32" cy="40" r="3.500" fill="#333" /><circle cx="50" cy="38" r="10.500" fill="#fff" /><circle cx="51" cy="40" r="5.500" fill="#444" /><circle cx="49" cy="37" r="2" fill="#fff" />
      <path d="M47 58Q56 59 60 54" fill="none" stroke="#222" strokeWidth="1.500" />
      <path d="M59 56L63 55L76 68L71 71Z" fill="#d8862c" /><path d="M71 71L76 68L82 74L78 78Z" fill="#ddd" /><path d="M78 78L82 73Q91 78 91 88Q82 86 78 78Z" fill="#0e0e0e" />
    </>
  ),
  gedit: (
    <>
      <rect x="18" y="10" width="64" height="80" rx="6" fill="#f1f1f1" />
      <path d="M25 22H75M25 27H75M25 32H75M25 37H75M25 42H75M25 47H75M25 52H75M25 57H75M25 62H75M25 67H75M25 72H75" stroke="#d2d2d2" strokeWidth="1.500" />
      <path d="M64 30L74 39L44 70L33 62Z" fill="#2f66e0" /><path d="M64 30L67 33L37 65L33 62Z" fill="#5b8cf4" /><path d="M33 62L44 70L31 76L25 78L28 70Z" fill="#fbdcb8" /><path d="M28 72L32 76L25 79Z" fill="#444" />
    </>
  ),
};

function DockItem({ children, dots = 0, active }) {
  return (
    <div className="relative flex h-full w-[140px] items-center justify-center">
      {active && <span className="absolute inset-x-[8px] top-[4px] h-[124px] rounded-[8px] bg-[#4a3d4b]" />}
      <span className="relative">{children}</span>
      {dots > 0 && (
        <span className="absolute inset-x-0 bottom-[5px] flex justify-center gap-[5px]">
          {Array.from({ length: dots }, (_, i) => <span key={i} className="size-[11px] rounded-full bg-[#e95420]" />)}
        </span>
      )}
    </div>
  );
}
const Icon = ({ name }) => <svg viewBox="0 0 100 100" className="block size-[100px]">{icons[name]}</svg>;

function Dock() {
  return (
    <div className="relative h-[132px] overflow-hidden bg-gradient-to-r from-[#281a2d] via-[#21141f] via-50% to-[#26142f]">
      <svg viewBox="0 0 2560 132" className="absolute inset-0 size-full">
        <g transform="translate(860,-8) scale(0.5485,0.33333)">
          <path d="M430 30H488L525 420H440L420 210L350 290L285 385L290 420H200V402Z" fill="#5a1730" />
          <path d="M533 30H663L600 150L650 420H575Z" fill="#5a1730" />
          <path d="M488 30H533L575 420H525Z M663 30H720L640 170Z" fill="#2e152b" />
          <path d="M65 30L75 260M370 30L240 195M200 30L215 190L90 420M290 130L150 415" stroke="#321832" strokeWidth="3" fill="none" />
        </g>
        <g transform="translate(1700,-8) scale(0.5485,0.33333)">
          <path d="M115 30H190L170 70ZM88 38L160 90L138 125L64 82Z" fill="#4f1730" />
          <path d="M500 30L447 140" stroke="#32172f" strokeWidth="8" />
        </g>
        <path d="M735 105L700 140M765 100L745 140M852 0L860 60" stroke="#3a1530" strokeWidth="1.500" />
        <path d="M0 0H2560V2H0Z" fill="#1b1a1c" />
      </svg>
      <div className="relative flex h-full">
        {["firefox", "thunderbird", "files", "music", "store", "writer", "help"].map((n) => <DockItem key={n}><Icon name={n} /></DockItem>)}
        <DockItem dots={2}><Icon name="terminal" /></DockItem>
        <DockItem><VncLogo bg="#fff" className="block size-[92px]" /></DockItem>
        <DockItem><Icon name="gimp" /></DockItem>
        <DockItem><Icon name="gedit" /></DockItem>
        <DockItem dots={1} active><RvizLogo className="block size-[84px]" /></DockItem>
        <DockItem dots={1}><Globe className="block size-[80px]" /></DockItem>
        <div className="mr-[41px] ml-auto grid grid-cols-3 content-center gap-[11px]">
          {Array.from({ length: 9 }, (_, i) => <span key={i} className="size-[12px] rounded-[3px] bg-[#efece8]" />)}
        </div>
      </div>
    </div>
  );
}

export default function App() {
  return (
    <div className="relative h-[1600px] w-[2560px] overflow-hidden bg-[#efefef] font-['Noto_Sans',sans-serif]">
      <TopBar />
      <RqtWindow />
      <Dock />
      <RvizWindow />
    </div>
  );
}
